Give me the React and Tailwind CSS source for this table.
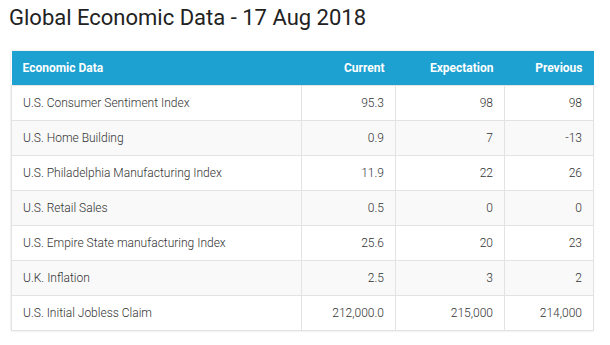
export default function App() {
  const rows = [
    ["U.S. Consumer Sentiment Index", "95.3", "98", "98"],
    ["U.S. Home Building", "0.9", "7", "-13"],
    ["U.S. Philadelphia Manufacturing Index", "11.9", "22", "26"],
    ["U.S. Retail Sales", "0.5", "0", "0"],
    ["U.S. Empire State manufacturing Index", "25.6", "20", "23"],
    ["U.K. Inflation", "2.5", "3", "2"],
    ["U.S. Initial Jobless Claim", "212,000.0", "215,000", "214,000"],
  ];
  return (
    <div className="w-[610px] h-[345px] bg-white pl-[11px] pt-[3px]" style={{ fontFamily: "Roboto, sans-serif" }}>
      <h1 className="text-[22px] leading-[30px] text-[#222] -ml-[2px]">Global Economic Data - 17 Aug 2018</h1>
      <div className="mt-[18px] w-[582px] shadow-[0_0_2px_rgba(0,0,0,0.15)]">
        <table className="w-full border-collapse text-[12px] table-fixed">
          <colgroup>
            <col className="w-[290px]" />
            <col className="w-[94px]" />
            <col className="w-[109px]" />
            <col className="w-[89px]" />
          </colgroup>
          <thead>
            <tr className="bg-[#1ca1d1] text-white h-[34px]">
              <th className="text-left font-bold px-[11px]">Economic Data</th>
              <th className="text-right font-bold px-[11px]">Current</th>
              <th className="text-right font-bold px-[11px]">Expectation</th>
              <th className="text-right font-bold px-[11px]">Previous</th>
            </tr>
          </thead>
          <tbody className="text-[#333] font-light">
            {rows.map((r, i) => (
              <tr key={i} className={`h-[35px] ${i % 2 === 1 ? "bg-[#f9f9f9]" : "bg-white"}`}>
                <td className="text-left px-[11px] border border-[#e3e3e3]">{r[0]}</td>
                <td className="text-right px-[11px] border border-[#e3e3e3]">{r[1]}</td>
                <td className="text-right px-[11px] border border-[#e3e3e3]">{r[2]}</td>
                <td className="text-right px-[11px] border border-[#e3e3e3]">{r[3]}</td>
              </tr>
            ))}
          </tbody>
        </table>
      </div>
    </div>
  );
}
